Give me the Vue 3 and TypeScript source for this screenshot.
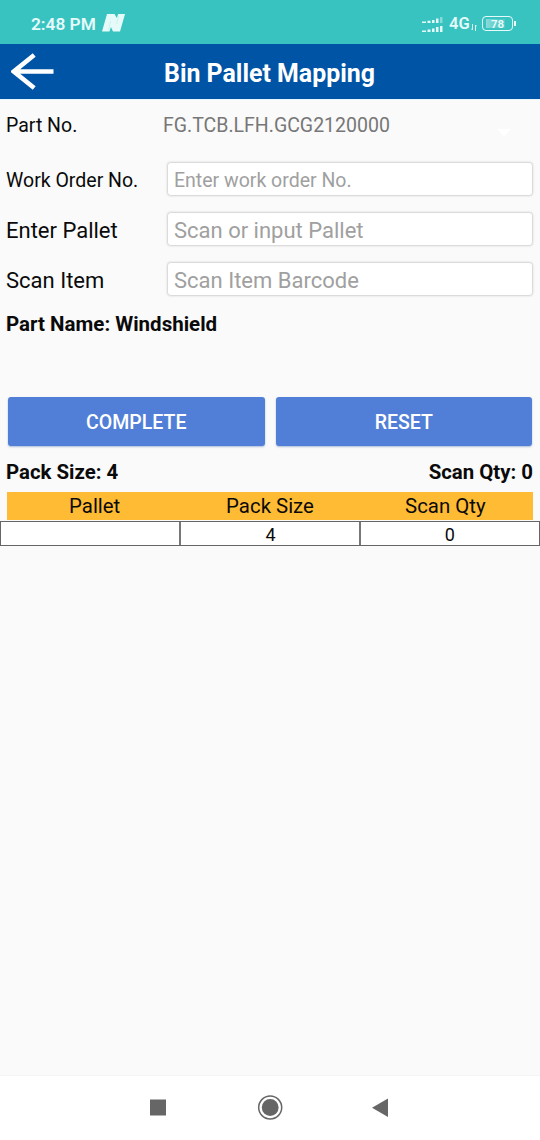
<script setup lang="ts">
import { ref } from 'vue'

interface Field {
  label: string
  hint: string
  small: boolean
}

const fields: Field[] = [
  { label: 'Work Order No.', hint: 'Enter work order No.', small: true },
  { label: 'Enter Pallet', hint: 'Scan or input Pallet', small: false },
  { label: 'Scan Item', hint: 'Scan Item Barcode', small: false },
]
const values = ref<string[]>(['', '', ''])
const columns: string[] = ['Pallet', 'Pack Size', 'Scan Qty']
const rows: string[][] = [['', '4', '0']]
</script>

<template>
  <div class="screen">
    <div class="status">
      <span class="clock">2:48 PM</span>
      <svg class="n-logo" width="24" height="18" viewBox="0 0 24 18">
        <path d="M5 0H12.5L14.8 4L16.2 0H23L18 17.5H11L9 13L7.4 17.5H0Z" fill="#e6fbf9" />
        <path d="M8.8 7L6.5 16M16.8 2L14.3 10" stroke="#b5ebe8" stroke-width=".6" />
      </svg>
      <span class="spacer"></span>
      <svg class="signal" width="22" height="17" viewBox="0 0 22 17" fill="#e2f9f7">
        <path d="M0 4.5h4V6H0zM5.5 3.8h3V6h-3zM10 3h2.5v3H10zM14 1.5h2.5V6H14z" />
        <path d="M18 0h2.5v6H18z" opacity=".45" />
        <path d="M0 13.5h4V15H0zM5.5 12.5h3V15h-3zM10 11.5h2.5V15H10zM14 10h2.5v5H14zM18 9h2.5v6H18z" />
      </svg>
      <span class="network">4G</span>
      <svg class="data" width="6" height="7" viewBox="0 0 6 7" fill="none" stroke="#d9f5f3" stroke-width="1">
        <path d="M1.5 0v6M0 4.5L1.5 6M4.5 7V1M6 2.5L4.5 1" />
      </svg>
      <span class="battery"><span class="charge"></span><b>78</b></span>
      <span class="tip"></span>
    </div>

    <header class="bar">
      <svg class="back" width="43" height="37" viewBox="0 0 43 37" fill="none" stroke="#fff" stroke-width="4.6">
        <path d="M23.2 2L2.8 18.5L23.2 35M3 18.5H42.5" />
      </svg>
      <h1>Bin Pallet Mapping</h1>
    </header>

    <main>
      <div class="part">
        <span class="label small">Part No.</span>
        <span class="selected">FG.TCB.LFH.GCG2120000</span>
        <span class="caret"></span>
      </div>
      <div v-for="(field, i) in fields" :key="field.label" class="field" :class="{ small: field.small }">
        <label class="label">{{ field.label }}</label>
        <input v-model="values[i]" :placeholder="field.hint" />
      </div>
      <div class="part-name">Part Name: Windshield</div>
      <div class="actions">
        <button>COMPLETE</button>
        <button>RESET</button>
      </div>
      <div class="totals"><span>Pack Size: 4</span><span>Scan Qty: 0</span></div>
      <div class="head"><span v-for="c in columns" :key="c">{{ c }}</span></div>
      <div v-for="(row, r) in rows" :key="r" class="row">
        <span v-for="(cell, c) in row" :key="c">{{ cell }}</span>
      </div>
    </main>

    <nav>
      <svg width="540" height="64" viewBox="0 0 540 64" fill="#666">
        <rect x="150" y="23.5" width="16" height="16" />
        <circle cx="270.2" cy="31.5" r="8.4" />
        <circle cx="270.2" cy="31.5" r="11.5" fill="none" stroke="#666" stroke-width="1.5" />
        <path d="M388 22.5V41L372 31.7Z" />
      </svg>
    </nav>
  </div>
</template>

<style>
body {
  margin: 0;
}
</style>

<style scoped>
.screen {
  width: 540px;
  height: 1140px;
  display: flex;
  flex-direction: column;
  overflow: hidden;
  background: #fafafa;
  color: #0a0a0a;
  font-family: Roboto, sans-serif;
}
.status {
  height: 44px;
  flex: none;
  display: flex;
  align-items: center;
  box-sizing: border-box;
  padding: 3px 25px 0 31px;
  background: #38c3c1;
  color: #e6fbf9;
}
.clock {
  font-size: 17.3px;
  font-weight: 600;
  width: 71px;
  white-space: nowrap;
}
.n-logo {
  margin-top: -1px;
}
.spacer {
  flex: 1;
}
.signal {
  margin-top: 3px;
  margin-right: 5px;
}
.network {
  font-size: 16.5px;
  font-weight: 600;
  width: 22px;
}
.data {
  margin-top: 7px;
  margin-right: 5px;
}
.battery {
  position: relative;
  width: 31px;
  height: 15px;
  box-sizing: border-box;
  border: 1.6px solid #e6fbf9;
  border-radius: 4px;
  font-size: 11.5px;
  line-height: 14px;
  text-align: center;
}
.charge {
  position: absolute;
  left: 3px;
  top: 2px;
  width: 19px;
  height: 9px;
  background: linear-gradient(90deg, #89dbd9, #50c9c7 70%);
}
.battery b {
  position: relative;
}
.tip {
  width: 2px;
  height: 5px;
  margin-left: 1px;
  margin-right: -1px;
  background: #e6fbf9;
}
.bar {
  height: 55px;
  flex: none;
  display: flex;
  align-items: center;
  background: #0054a6;
  color: #fff;
}
.back {
  margin-left: 11px;
  width: 43px;
}
h1 {
  margin: 4px 0 0 110px;
  font-size: 24.9px;
  font-weight: 700;
  line-height: 29px;
}
main {
  flex: 1;
  border-top: 1px solid #e5f7fd;
}
.part {
  height: 50px;
  display: flex;
  align-items: center;
  padding-left: 6px;
}
.label {
  width: 160px;
  font-size: 22px;
  white-space: nowrap;
}
.small,
.small .label,
.small input {
  font-size: 19.5px;
}
.part .label {
  width: 157px;
}
.selected {
  width: 334px;
  color: #777;
  font-size: 19.5px;
}
.caret {
  margin-top: 14px;
  border: 7px solid transparent;
  border-top-color: #fff;
  border-bottom: 0;
}
.field {
  height: 50px;
  display: flex;
  align-items: center;
  padding: 0 7px 0 6px;
}
.part + .field {
  margin-top: 4px;
}
input {
  flex: 1;
  min-width: 0;
  height: 32px;
  margin: 0 1px 0 2px;
  padding: 2px 6px 0;
  box-sizing: border-box;
  border: 0;
  border-radius: 3px;
  background: #fff;
  box-shadow: 0 0 2px 1px #d0d0d0;
  font-family: inherit;
  font-size: 22px;
  outline: 0;
}
input::placeholder {
  color: #a0a0a0;
  opacity: 1;
}
.field .label {
  padding-top: 2px;
}
.part-name {
  height: 24px;
  margin-top: 8px;
  padding-left: 6px;
  font-size: 20.5px;
  font-weight: 700;
  line-height: 24px;
}
.actions {
  display: flex;
  gap: 11px;
  margin-top: 61px;
  padding: 0 8px;
}
button {
  flex: 1;
  height: 49px;
  border: 0;
  border-radius: 3px;
  padding: 1px 0 0;
  background: #517fd8;
  box-shadow: 0 1px 2px #aabbd8;
  color: #fff;
  font: 500 19.5px Roboto, sans-serif;
}
.totals {
  display: flex;
  justify-content: space-between;
  margin-top: 14px;
  padding: 0 7px 0 6px;
  font-size: 20.4px;
  font-weight: 700;
  line-height: 25px;
}
.head {
  display: grid;
  grid-template-columns: repeat(3, 1fr);
  height: 28px;
  margin: 7px 7px 0;
  background: #ffbb33;
  font-size: 20.4px;
  line-height: 29px;
  text-align: center;
}
.row {
  display: grid;
  grid-template-columns: repeat(3, 1fr);
  height: 25px;
  margin-top: 1px;
  box-sizing: border-box;
  border: 1px solid #666;
  background: #fff;
  font-size: 18px;
  line-height: 25px;
  text-align: center;
}
.row span {
  height: 23px;
}
.row span + span {
  margin-left: -1px;
  border-left: 2px solid #777;
}
nav {
  height: 64px;
  flex: none;
  border-top: 1px solid #f4f4f4;
  background: #fff;
}
nav svg {
  display: block;
}
</style>
